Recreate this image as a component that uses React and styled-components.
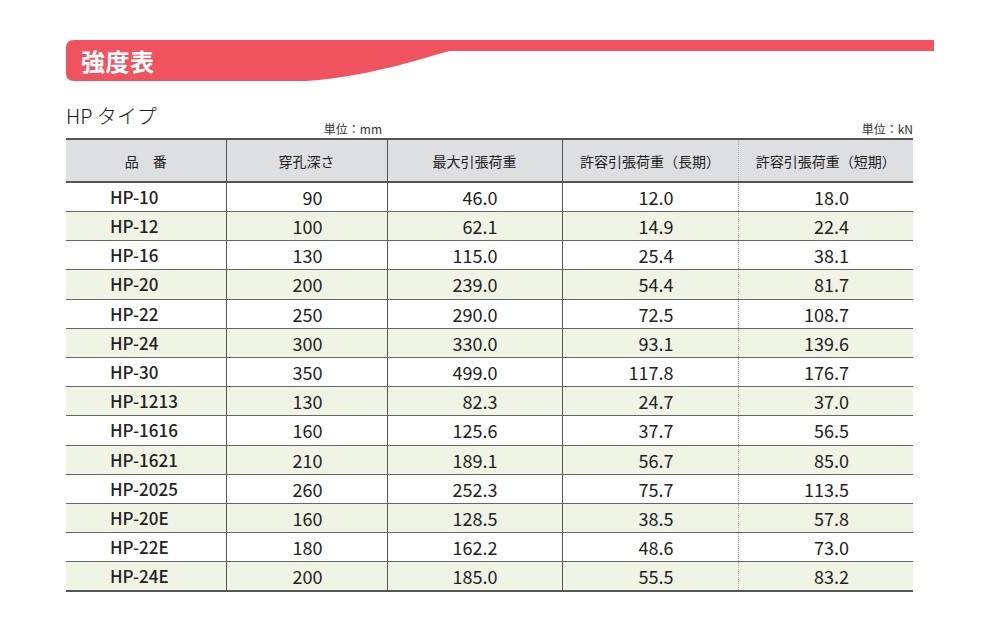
import React from 'react'
import styled, { createGlobalStyle } from 'styled-components'

const GlobalStyle = createGlobalStyle`
  html, body {
    margin: 0;
    padding: 0;
    background: #fff;
  }
  body {
    font-family: "Noto Sans CJK JP", "Noto Sans", sans-serif;
    color: #222;
  }
`

const rows = [
  ['HP-10', '90', '46.0', '12.0', '18.0'],
  ['HP-12', '100', '62.1', '14.9', '22.4'],
  ['HP-16', '130', '115.0', '25.4', '38.1'],
  ['HP-20', '200', '239.0', '54.4', '81.7'],
  ['HP-22', '250', '290.0', '72.5', '108.7'],
  ['HP-24', '300', '330.0', '93.1', '139.6'],
  ['HP-30', '350', '499.0', '117.8', '176.7'],
  ['HP-1213', '130', '82.3', '24.7', '37.0'],
  ['HP-1616', '160', '125.6', '37.7', '56.5'],
  ['HP-1621', '210', '189.1', '56.7', '85.0'],
  ['HP-2025', '260', '252.3', '75.7', '113.5'],
  ['HP-20E', '160', '128.5', '38.5', '57.8'],
  ['HP-22E', '180', '162.2', '48.6', '73.0'],
  ['HP-24E', '200', '185.0', '55.5', '83.2'],
]

function App() {
  return (
    <>
      <GlobalStyle />
      <Page>
        <Banner>
          <BannerShape viewBox="0 0 868 41" preserveAspectRatio="none">
            <path
              d="M8,0 H868 V11 H384 C365,15 310,36 240,41 H8 Q0,41 0,33 V8 Q0,0 8,0 Z"
              fill="#ef535f"
            />
          </BannerShape>
          <BannerTitle>強度表</BannerTitle>
        </Banner>

        <CaptionRow>
          <LeftCaption>
            <TypeTitle>HP タイプ</TypeTitle>
            <Unit>単位：mm</Unit>
          </LeftCaption>
          <RightCaption>
            <Unit>単位：kN</Unit>
          </RightCaption>
        </CaptionRow>

        <Table>
          <colgroup>
            <col style={{ width: 160 }} />
            <col style={{ width: 161 }} />
            <col style={{ width: 175 }} />
            <col style={{ width: 176 }} />
            <col style={{ width: 175 }} />
          </colgroup>
          <thead>
            <tr>
              <Th>品　番</Th>
              <Th>穿孔深さ</Th>
              <Th>最大引張荷重</Th>
              <Th $dotted>許容引張荷重（長期）</Th>
              <Th $last>許容引張荷重（短期）</Th>
            </tr>
          </thead>
          <tbody>
            {rows.map((r, i) => (
              <Row key={r[0]} $shade={i % 2 === 1}>
                <NameCell>{r[0]}</NameCell>
                <NumCell>{r[1]}</NumCell>
                <NumCell>{r[2]}</NumCell>
                <NumCell $dotted>{r[3]}</NumCell>
                <NumCell $last>{r[4]}</NumCell>
              </Row>
            ))}
          </tbody>
        </Table>
      </Page>
    </>
  )
}

export default App

const Page = styled.div`
  width: 1000px;
  height: 634px;
  padding: 40px 0 0 66px;
  box-sizing: border-box;
`

const Banner = styled.div`
  position: relative;
  width: 868px;
  height: 41px;
`

const BannerShape = styled.svg`
  position: absolute;
  inset: 0;
  width: 100%;
  height: 100%;
`

const BannerTitle = styled.h1`
  position: relative;
  margin: 0;
  padding-left: 15px;
  font-size: 24px;
  line-height: 41px;
  font-weight: 700;
  color: #fff;
  letter-spacing: 0.5px;
`

const CaptionRow = styled.div`
  display: flex;
  align-items: flex-end;
  width: 847px;
  margin-top: 21px;
  height: 36px;
`

const LeftCaption = styled.div`
  width: 316px;
  display: flex;
  justify-content: space-between;
  align-items: flex-end;
`

const RightCaption = styled.div`
  flex: 1;
  display: flex;
  justify-content: flex-end;
`

const TypeTitle = styled.div`
  font-size: 20px;
  font-weight: 300;
  line-height: 24px;
  align-self: flex-start;
  margin-bottom: 10px;
  color: #1a1a1a;
`

const Unit = styled.div`
  font-size: 12px;
  line-height: 14px;
  margin-bottom: 2px;
  color: #333;
`

const Table = styled.table`
  width: 847px;
  border-collapse: collapse;
  table-layout: fixed;
  border-top: 2px solid #555;
  border-bottom: 2px solid #555;
`

const Th = styled.th`
  height: 41px;
  padding: 0;
  background: #dedfe0;
  font-size: 14px;
  font-weight: 400;
  color: #222;
  text-align: center;
  border-bottom: 2px solid #555;
  border-right: ${p => (p.$last ? 'none' : p.$dotted ? '1px dotted #aaa' : '1px solid #555')};
`

const Row = styled.tr`
  height: 29.2px;
  background: ${p => (p.$shade ? '#eff4e4' : '#fff')};
  td {
    border-bottom: 1px solid #666;
  }
`

const NameCell = styled.td`
  padding: 0 0 0 44px;
  font-size: 17px;
  font-weight: 500;
  color: #222;
  line-height: 28px;
  border-right: 1px solid #555;
`

const NumCell = styled.td`
  padding: 0 64px 0 0;
  text-align: right;
  font-size: 18px;
  font-weight: 400;
  color: #222;
  line-height: 28px;
  border-right: ${p => (p.$last ? 'none' : p.$dotted ? '1px dotted #aaa' : '1px solid #555')};
`
